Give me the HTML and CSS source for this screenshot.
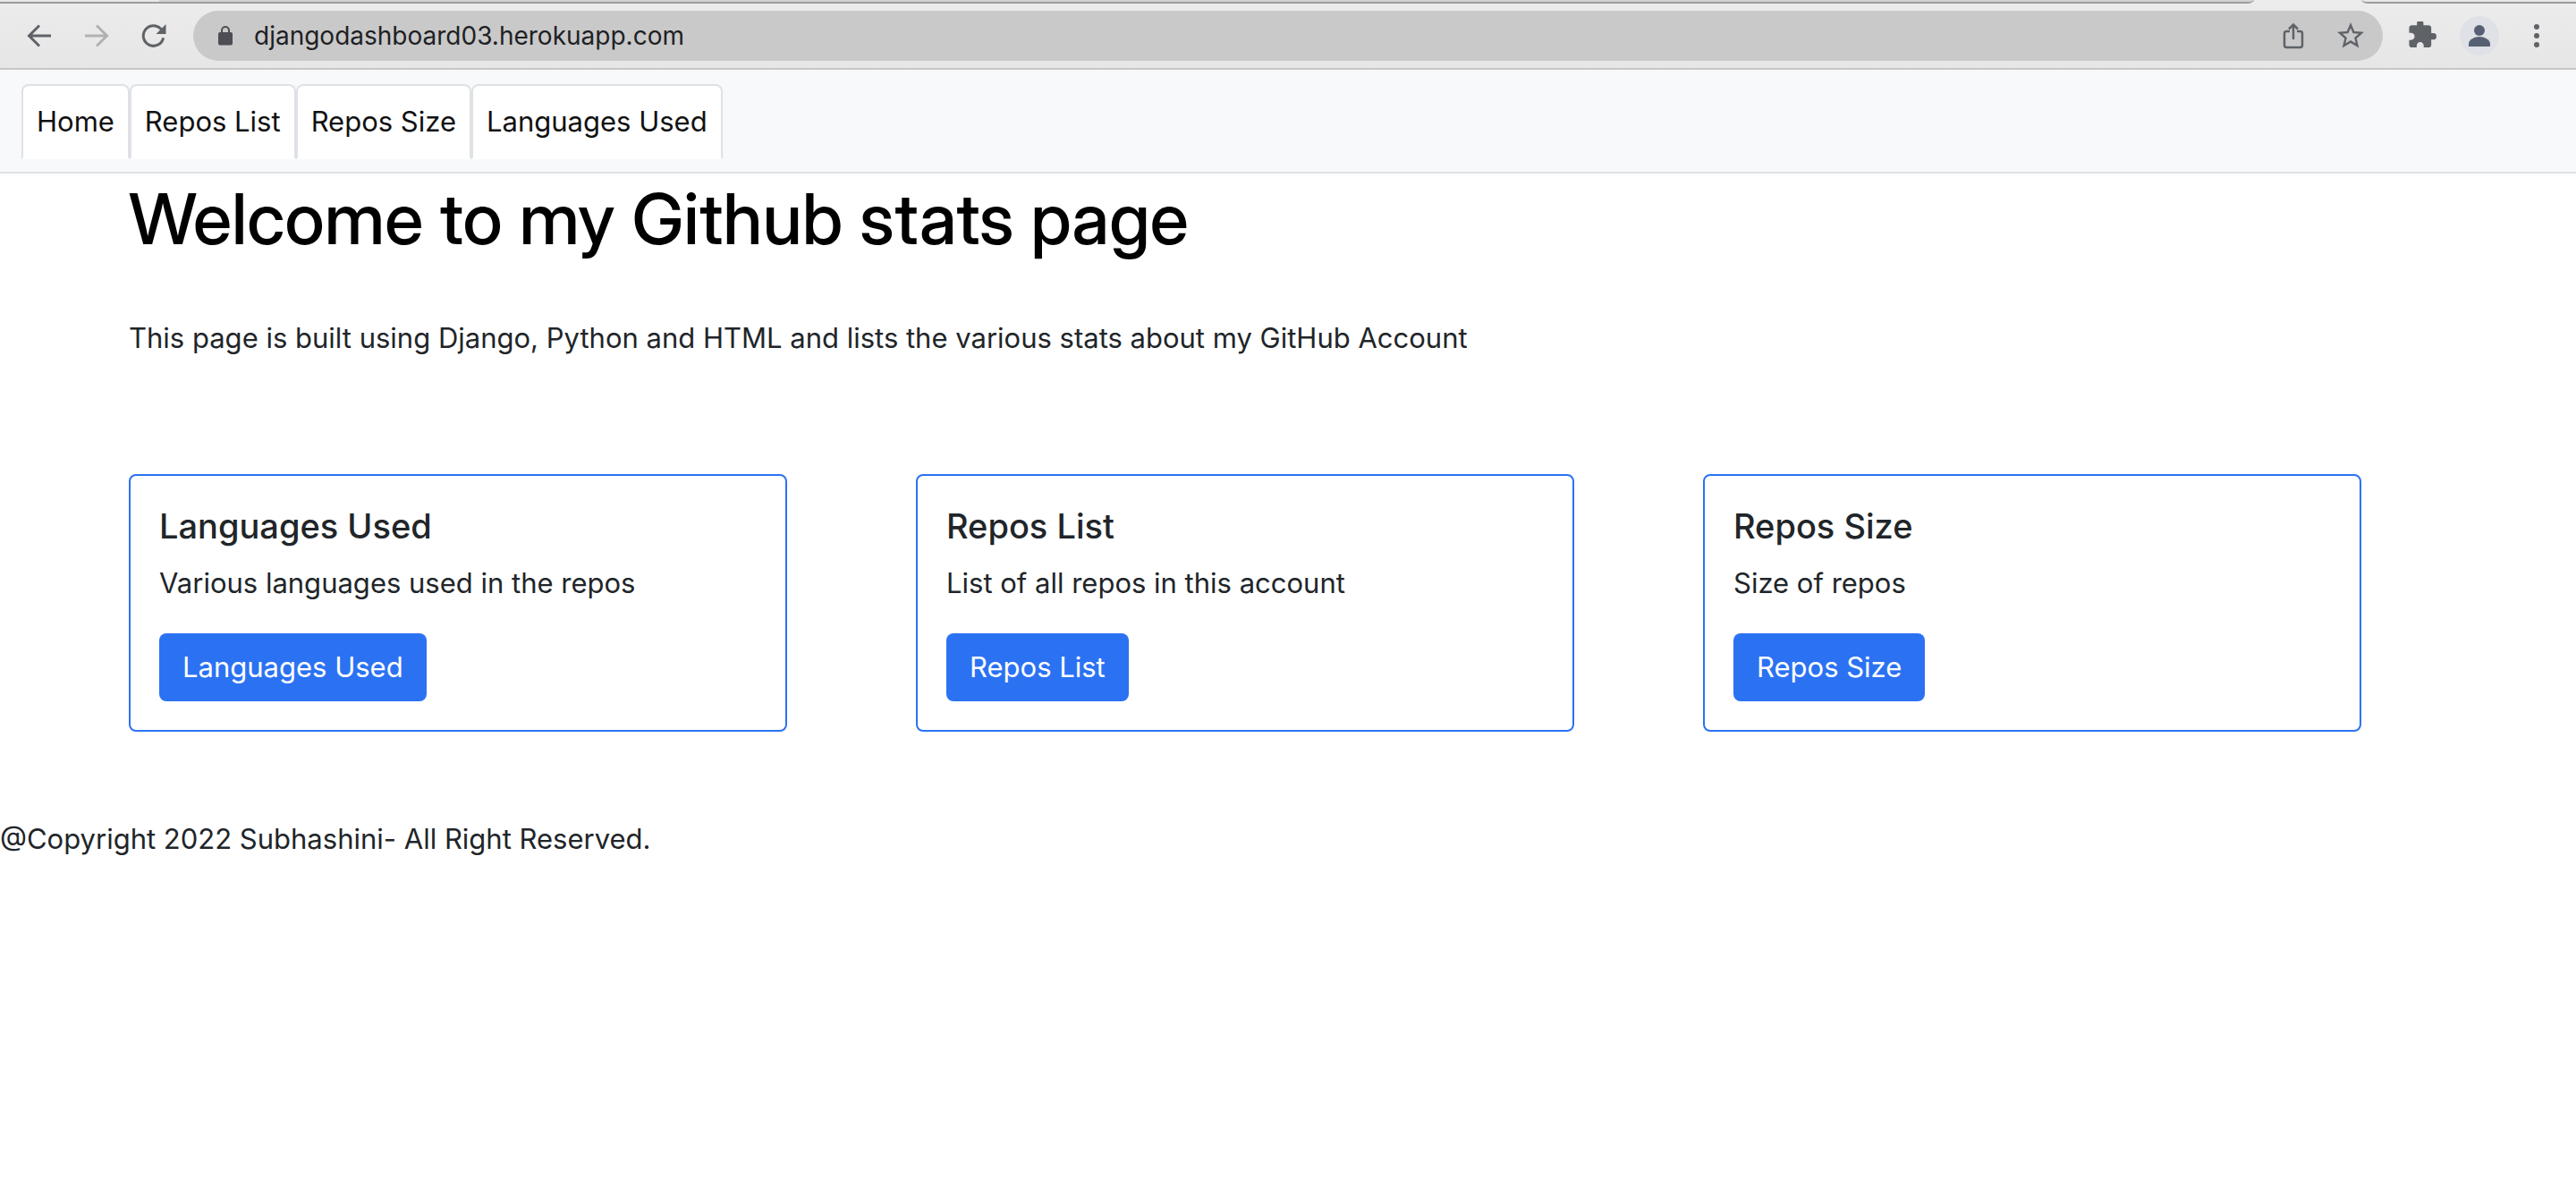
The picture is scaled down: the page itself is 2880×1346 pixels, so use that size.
FILE: index.html
```html
<!DOCTYPE html>
<html lang="en">
<head>
<meta charset="utf-8">
<title>Github stats</title>
<link rel="stylesheet" href="styles.css">
</head>
<body>
<header class="browser">
  <div class="tabstrip"><span class="strip strip-left"></span><span class="strip strip-right"></span></div>
  <div class="toolbar">
    <button class="tool" aria-label="Back"><svg width="28" height="28" viewBox="0 0 28 28"><path d="M27 14H3M14 2.500L2.500 14L14 25.500" fill="none" stroke="#5f6368" stroke-width="3"/></svg></button>
    <button class="tool" aria-label="Forward"><svg width="28" height="28" viewBox="0 0 28 28"><path d="M1 14H25M14 2.500L25.500 14L14 25.500" fill="none" stroke="#afb1b3" stroke-width="3"/></svg></button>
    <button class="tool" aria-label="Reload"><svg width="28" height="28" viewBox="0 0 28 28"><path d="M24.300 17.500A11.300 11.300 0 1 1 21.500 6" fill="none" stroke="#5f6368" stroke-width="3" stroke-linecap="round"/><path d="M27.500 1V12H16.500Z" fill="#5f6368"/></svg></button>
    <div class="address">
      <span class="tool"><svg width="16" height="22" viewBox="0 0 16 22"><rect y="7" width="16" height="14.500" rx="2" fill="#4d4e54"/><path d="M4 8V5a4 4 0 0 1 8 0V8" fill="none" stroke="#4d4e54" stroke-width="2"/></svg></span>
      <input class="url" type="text" aria-label="Address" value="djangodashboard03.herokuapp.com">
      <button class="tool" aria-label="Share"><svg width="24" height="30" viewBox="0 0 24 30"><path d="M8 10H4.500A2.500 2.500 0 0 0 2 12.500V25.500A2.500 2.500 0 0 0 4.500 28H19.500A2.500 2.500 0 0 0 22 25.500V12.500A2.500 2.500 0 0 0 19.500 10H16M12 19V3M7 7.500L12 2.500L17 7.500" fill="none" stroke="#5f6368" stroke-width="2.500"/></svg></button>
      <button class="tool" aria-label="Bookmark"><svg width="30" height="30" viewBox="2 2 20 20"><path fill="#5f6368" d="M22 9.240l-7.190-.62L12 2 9.190 8.630 2 9.240l5.460 4.730L5.820 21 12 17.270 18.180 21l-1.630-7.030L22 9.240zM12 15.400l-3.760 2.270 1-4.280-3.320-2.880 4.380-.38L12 6.100l1.710 4.040 4.380.38-3.320 2.880 1 4.280L12 15.400z"/></svg></button>
    </div>
    <button class="tool" aria-label="Extensions"><svg width="32" height="32" viewBox="1 2 22 22"><path fill="#5f6368" d="M20.500 11H19V7c0-1.100-.9-2-2-2h-4V3.500a2.500 2.500 0 0 0-5 0V5H4c-1.100 0-1.990.9-1.990 2v3.800H3.500c1.490 0 2.700 1.210 2.700 2.700s-1.210 2.700-2.700 2.700H2V20c0 1.100.9 2 2 2h3.800v-1.500c0-1.490 1.210-2.700 2.700-2.700s2.700 1.210 2.700 2.700V22H17c1.100 0 2-.9 2-2v-4h1.500a2.500 2.500 0 0 0 0-5z"/></svg></button>
    <button class="tool" aria-label="Profile"><svg width="44" height="44" viewBox="0 0 44 44"><circle cx="22" cy="22" r="22" fill="#dfe1e6"/><circle cx="22" cy="16" r="6" fill="#566072"/><path d="M10 34V31C10 26 17 23 22 23S34 26 34 31V34Z" fill="#566072"/></svg></button>
    <button class="tool" aria-label="Menu"><svg width="8" height="28" viewBox="0 0 8 28"><g fill="#5f6368"><circle cx="4" cy="4" r="3"/><circle cx="4" cy="14" r="3"/><circle cx="4" cy="24" r="3"/></g></svg></button>
  </div>
</header>
<nav class="nav">
  <a class="nav-link" href="#home">Home</a>
  <a class="nav-link" href="#list">Repos List</a>
  <a class="nav-link" href="#size">Repos Size</a>
  <a class="nav-link" href="#languages">Languages Used</a>
</nav>
<main class="content">
  <h1 class="title">Welcome to my Github stats page</h1>
  <p class="lead">This page is built using Django, Python and HTML and lists the various stats about my GitHub Account</p>
  <div class="cards">
    <section class="card"><h2 class="card-title">Languages Used</h2><p class="card-text">Various languages used in the repos</p><a class="btn" href="#languages">Languages Used</a></section>
    <section class="card"><h2 class="card-title">Repos List</h2><p class="card-text">List of all repos in this account</p><a class="btn" href="#list">Repos List</a></section>
    <section class="card"><h2 class="card-title">Repos Size</h2><p class="card-text">Size of repos</p><a class="btn" href="#size">Repos Size</a></section>
  </div>
</main>
<footer class="footer">@Copyright 2022 Subhashini- All Right Reserved.</footer>
</body>
</html>
```
FILE: styles.css
```css
* { box-sizing: border-box; }

body {
  margin: 0;
  background: #fff;
  color: #212529;
  font: 31px/48px Inter, "Liberation Sans", sans-serif;
}

h1, h2, p { margin: 0; }
a { color: inherit; text-decoration: none; }
svg { display: block; }

.browser {
  background: linear-gradient(#ececec, #e6e6e6);
  border-bottom: 2px solid #c5c7c9;
}

.tabstrip { display: flex; gap: 120px; height: 4px; }
.strip { border-bottom: 2px solid #9c9c9c; }
.strip-left {
  flex: 1;
  background: linear-gradient(90deg, #e8e8e8 178px, #d3d3d3 178px);
  border-bottom-right-radius: 8px 4px;
}
.strip-right { width: 240px; background: #e8e8e8; border-bottom-left-radius: 8px 4px; }

.toolbar { display: flex; align-items: center; padding: 8px 12px; }
.tool {
  display: flex;
  flex: none;
  align-items: center;
  justify-content: center;
  width: 64px;
  height: 56px;
  padding: 0;
  border: 0;
  background: none;
}
.address {
  display: flex;
  flex: 1;
  margin: 0 12px;
  padding: 0 4px;
  border-radius: 28px;
  background: #c9c9c9;
}
.url {
  flex: 1;
  min-width: 0;
  padding: 0;
  border: 0;
  background: none;
  color: #202124;
  font: 28px/56px Inter, "Liberation Sans", sans-serif;
}

.nav {
  display: flex;
  padding: 16px 24px 14px;
  background: #f8f9fb;
  border-bottom: 2px solid #dee2e6;
}
.nav-link {
  padding: 16px 15px;
  border: 2px solid #dee2e6;
  border-bottom-color: #fff;
  border-radius: 8px 8px 0 0;
  background: #fff;
  color: #111;
}

.content { padding: 0 240px 0 5%; }
.title {
  color: #000;
  font-family: "Inter Display", Inter, "Liberation Sans", sans-serif;
  font-size: 79px;
  font-weight: 500;
  line-height: 100px;
}
.lead { margin: 60px 0 128px; }
.cards { display: grid; grid-template-columns: repeat(3, 1fr); gap: 144px; }
.card { padding: 32px; border: 2px solid #2b72f3; border-radius: 8px; }
.card-title { margin-bottom: 16px; font-size: 38px; font-weight: 500; line-height: 48px; }
.card-text { margin-bottom: 32px; }
.btn {
  display: inline-block;
  padding: 14px 26px;
  border-radius: 8px;
  background: #2b72f3;
  color: #fff;
  vertical-align: top;
}
.footer { margin-top: 96px; }
```
